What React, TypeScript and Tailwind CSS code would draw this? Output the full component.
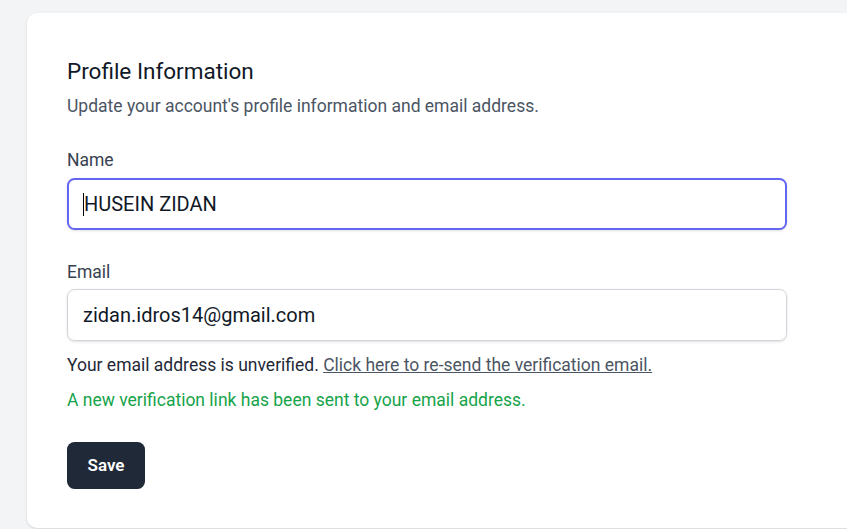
export default function App() {
  return (
    <div
      className="w-[847px] h-[529px] overflow-hidden bg-[#f3f4f6] pt-[13px] pl-[27px]"
      style={{ fontFamily: "Roboto, 'Noto Sans', sans-serif" }}
    >
      <section className="w-[900px] h-[515px] bg-white rounded-[10px] shadow-sm px-10 pt-[41px] pb-10">
        <header>
          <h2 className="text-[22.5px] leading-[35px] font-normal text-[#111827]">
            Profile Information
          </h2>
          <p className="mt-[5px] text-[17.5px] leading-[25px] text-[#4b5563]">
            Update your account's profile information and email address.
          </p>
        </header>

        <form className="mt-[29px] w-[720px] flex flex-col gap-[30px]">
          <div>
            <label className="block text-[17.5px] leading-[25px] font-normal text-[#374151]">
              Name
            </label>
            <div className="mt-[5px] h-[52px] flex items-center px-[14px] rounded-[7.5px] border-[2.5px] border-[#6366f1] shadow-sm text-[20px] text-[#111827]">
              <span className="w-px h-[23px] bg-black" />
              HUSEIN ZIDAN
            </div>
          </div>

          <div>
            <label className="block text-[17.5px] leading-[25px] font-normal text-[#374151]">
              Email
            </label>
            <div className="mt-[4px] h-[52px] flex items-center px-[15px] rounded-[7.5px] border border-[#d1d5db] shadow-sm text-[20px] text-[#111827]">
              zidan.idros14@gmail.com
            </div>

            <p className="mt-[12px] text-[17.5px] leading-[25px] text-[#1f2937]">
              Your email address is unverified.{" "}
              <span className="underline text-[#4b5563]">
                Click here to re-send the verification email.
              </span>
            </p>
            <p className="mt-[10px] text-[17.5px] leading-[25px] font-normal text-[#16a34a]">
              A new verification link has been sent to your email address.
            </p>
          </div>

          <div className="-mt-px">
            <button
              type="button"
              className="w-[78px] h-[47px] rounded-[7.5px] bg-[#1f2937] text-white text-[17px] font-semibold"
            >
              Save
            </button>
          </div>
        </form>
      </section>
    </div>
  );
}
